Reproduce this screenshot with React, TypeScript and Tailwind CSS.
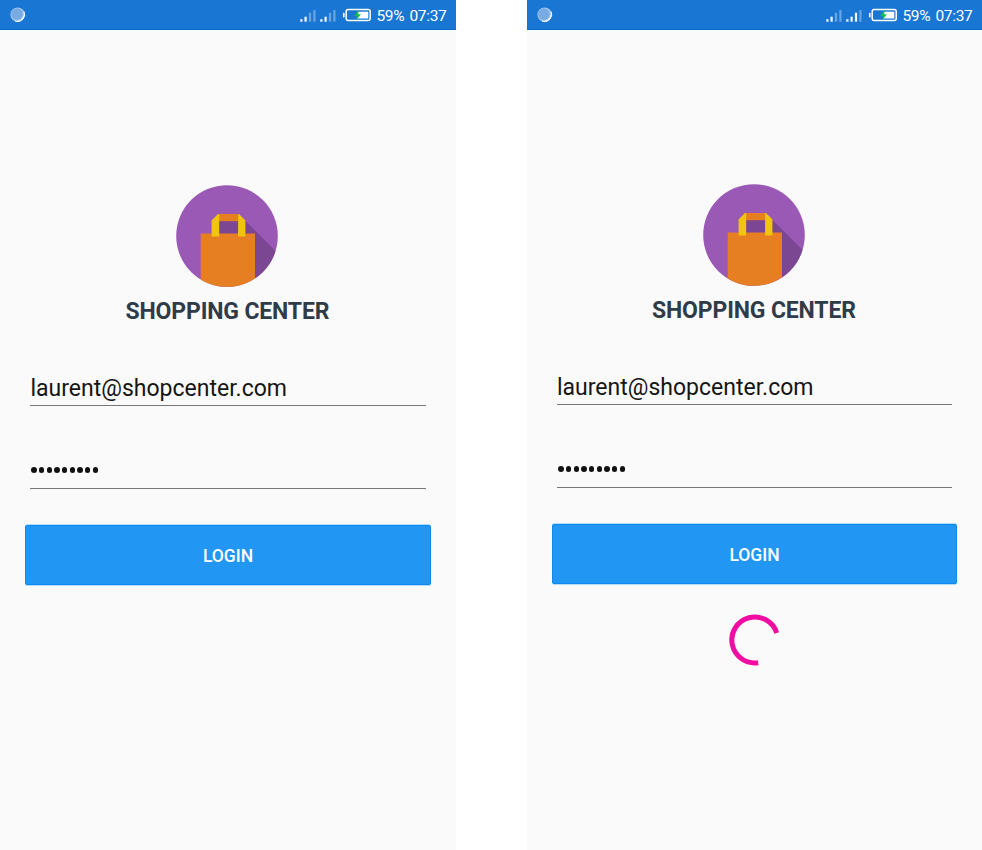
import React from "react";

function Signal({ strong }: { strong: number }) {
  const bars = [
    { x: 0, h: 2.5 },
    { x: 4.2, h: 5 },
    { x: 8.6, h: 9 },
    { x: 13, h: 12 },
  ];
  return (
    <svg width="16" height="12" viewBox="0 0 16 12" className="block">
      {bars.map((b, i) => (
        <rect key={b.x} x={b.x + 0.3} y={11.7 - b.h} width="2.2" height={b.h} fill="#fff" opacity={i < strong ? 0.95 : 0.35} />
      ))}
    </svg>
  );
}

function Battery() {
  return (
    <svg width="28" height="14" viewBox="0 0 28 14" className="block">
      <rect x="0" y="4.8" width="1.6" height="4.6" rx="0.6" fill="#fff" />
      <rect x="3.2" y="1.4" width="24" height="11.2" rx="2" fill="none" stroke="#fff" strokeWidth="1.5" />
      <rect x="14.5" y="3.7" width="10.8" height="6.8" fill="#fff" />
      <path d="M15.8 2.2 L11.2 7.8 H13.9 L13.3 12 L18 6.2 H15.2 Z" fill="#14c04d" />
    </svg>
  );
}

function StatusBar({ second }: { second: number }) {
  return (
    <div className="flex h-[30px] items-center border-b border-[#0e6bc9] bg-[#1976d2] pl-[10px] pr-[9px]">
      <svg width="16" height="16" viewBox="0 0 16 16" className="mt-px block">
        <circle cx="7.6" cy="7.6" r="7.2" fill="#a4c8ee" />
        <path d="M14 4.4 A7.2 7.2 0 0 1 5 14.3 A8 8 0 0 0 14 4.4Z" fill="#fff" stroke="#fff" strokeWidth="0.5" />
        <circle cx="7" cy="7.1" r="5.8" fill="#78abe2" />
      </svg>
      <div className="ml-auto flex items-center">
        <div className="mt-[3px] flex gap-1">
          <Signal strong={2} />
          <Signal strong={second} />
        </div>
        <div className="ml-[7px] mt-px">
          <Battery />
        </div>
        <span className="ml-[5.5px] mt-[2px] w-[28px] whitespace-nowrap text-[15.5px] leading-[20px] tracking-[-0.35px] text-white">59%</span>
        <span className="ml-[5px] mr-[0.5px] mt-[2px] w-[37px] whitespace-nowrap text-[15.5px] leading-[20px] tracking-[-0.35px] text-white">07:37</span>
      </div>
    </div>
  );
}

function Logo({ id }: { id: string }) {
  return (
    <svg width="102" height="102" viewBox="0 0 102 102" className="block">
      <defs>
        <clipPath id={id}>
          <circle cx="51" cy="51" r="50.8" />
        </clipPath>
      </defs>
      <g clipPath={`url(#${id})`}>
        <rect width="102" height="102" fill="#9b59b6" />
        <path d="M43 36 H69 V35.6 L110 76.5 V102 H79 V50 H43 Z" fill="#7c4792" />
        <rect x="24.7" y="48.5" width="54.3" height="54" fill="#e67e22" />
        <rect x="43" y="29" width="19.6" height="7.2" fill="#e67e22" />
        <path d="M35.6 51.6 V35.4 L42 29 H43.2 V51.6 Z" fill="#f1c40f" />
        <path d="M69.4 51.6 V35.4 L63 29 H62.1 V51.6 Z" fill="#f1c40f" />
      </g>
    </svg>
  );
}

function Spinner() {
  return (
    <svg width="52" height="52" viewBox="0 0 52 52" className="block">
      <path d="M29.2 48.7 A23 23 0 1 1 47.7 18.9" fill="none" stroke="#f10da2" strokeWidth="5" />
    </svg>
  );
}

function Screen({ id, second, loading }: { id: string; second: number; loading?: boolean }) {
  return (
    <section className={`flex h-[850px] shrink-0 flex-col bg-[#fafafa] ${loading ? "w-[455px]" : "w-[456px]"}`}>
      <StatusBar second={second} />
      <div className={`flex flex-col px-[25px] ${loading ? "pt-[154px]" : "pt-[155px]"}`}>
        <div className={loading ? "ml-[150.5px]" : "ml-[151px]"}>
          <Logo id={id} />
        </div>
        <h1 className={`mt-[10px] whitespace-nowrap text-[23px] font-bold leading-[30px] tracking-[-0.15px] text-[#2f3c47] ${loading ? "ml-[100px]" : "ml-[100.5px]"}`}>SHOPPING CENTER</h1>
        <div className="mx-[5px] mt-[39px] h-[40px] border-b border-[#777] text-[#151515]">
          <span className={`block whitespace-nowrap pt-[8px] text-[23px] leading-[30px] ${loading ? "pl-0" : "pl-[0.5px]"}`}>laurent@shopcenter.com</span>
        </div>
        <div className="mx-[5px] mt-[43px] flex h-[40px] items-center gap-[2.4px] border-b border-[#777] pl-[1.3px]">
          {Array.from({ length: 9 }, (_, i) => (
            <span key={i} className="mt-[3px] size-[5.3px] rounded-full bg-[#111]" />
          ))}
        </div>
        <button className="mt-[36px] flex h-[60px] items-center justify-center rounded-[2px] border border-[#0e89ee] bg-[#2196f3] text-[17.5px] font-medium text-white shadow-[0_1px_0_#b5dcfb,0_-1px_0_#b5dcfb]">
          <span className="pt-[2px]">LOGIN</span>
        </button>
        {loading && (
          <div className="ml-[177px] mt-[30px]">
            <Spinner />
          </div>
        )}
      </div>
    </section>
  );
}

export default function App() {
  return (
    <main className="flex h-[850px] w-[982px] gap-[71px] overflow-hidden bg-white font-['Roboto',sans-serif]">
      <Screen id="logo-idle" second={2} />
      <Screen id="logo-loading" second={3} loading />
    </main>
  );
}
